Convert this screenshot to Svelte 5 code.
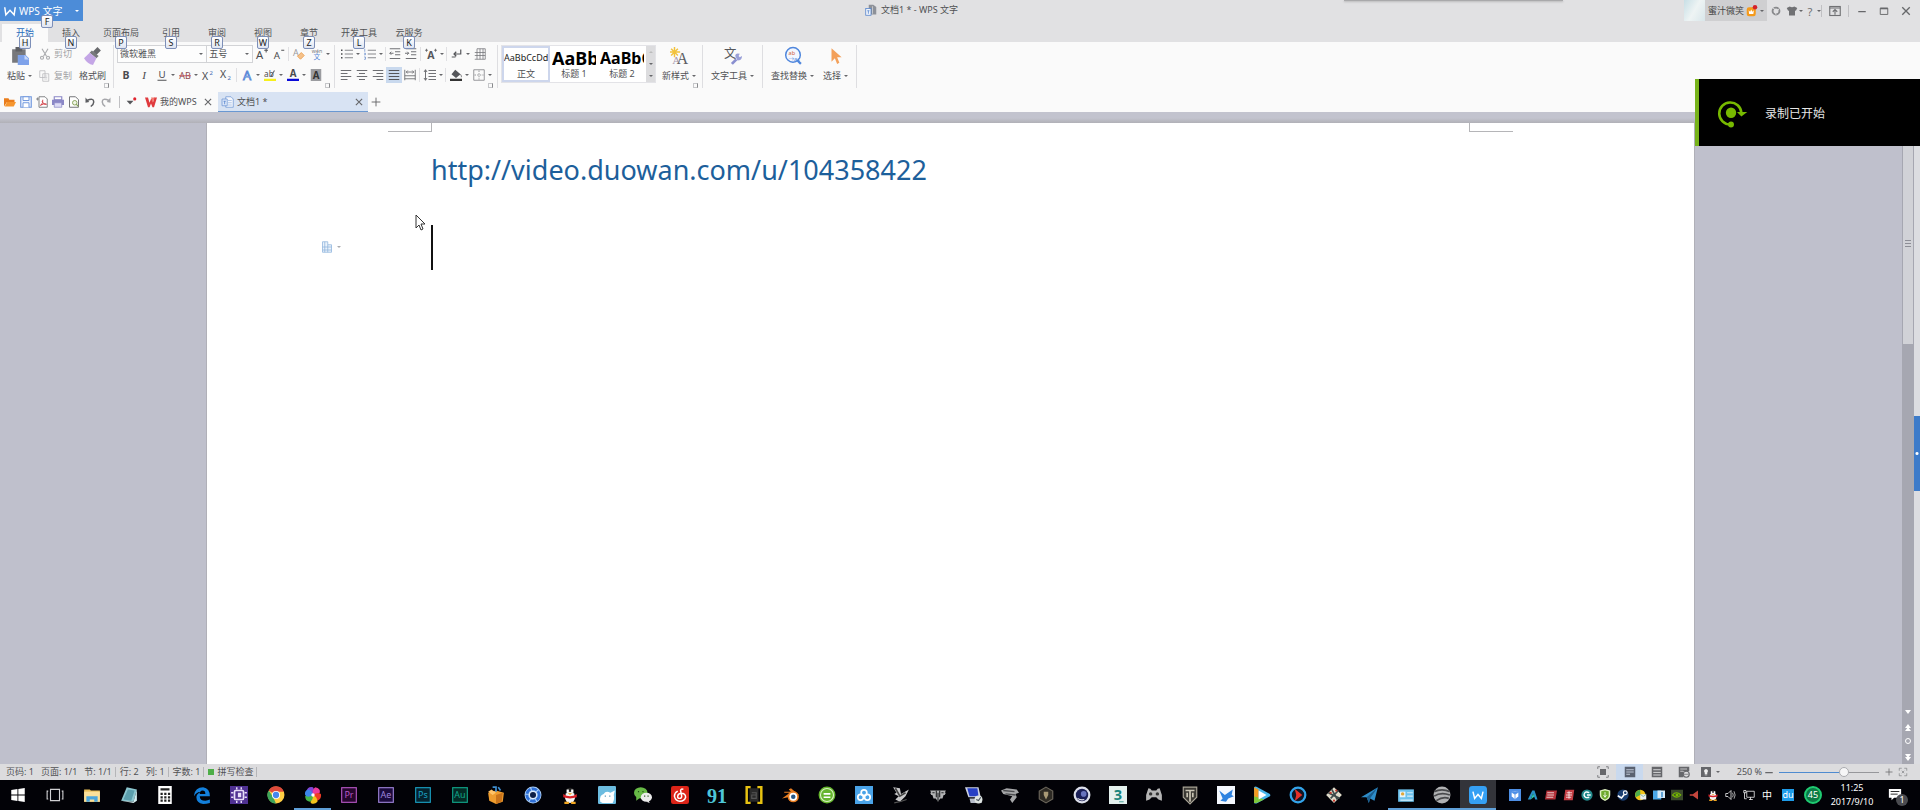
<script>
  let zoom = $state(250);
  let activeTab = $state('开始');
  let fontName = $state('微软雅黑');
  let fontSize = $state('五号');

  const tabs = [
    { name: '开始', key: 'H' },
    { name: '插入', key: 'N' },
    { name: '页面布局', key: 'P' },
    { name: '引用', key: 'S' },
    { name: '审阅', key: 'R' },
    { name: '视图', key: 'W' },
    { name: '章节', key: 'Z' },
    { name: '开发工具', key: 'L' },
    { name: '云服务', key: 'K' }
  ];

  const fontTools = [
    { icon: 'bold', label: '加粗' },
    { icon: 'italic', label: '倾斜' },
    { icon: 'underline', label: '下划线', drop: true },
    { icon: 'strike', label: '删除线', drop: true },
    { icon: 'sup', label: '上标' },
    { icon: 'sub', label: '下标' },
    { sep: true },
    { icon: 'effect', label: '文字效果', drop: true },
    { icon: 'mark', label: '突出显示', drop: true },
    { icon: 'color', label: '字体颜色', drop: true },
    { icon: 'shade', label: '字符底纹' }
  ];

  const fontTopTools = [
    { icon: 'grow', label: '增大字号' },
    { icon: 'shrink', label: '减小字号', slim: true },
    { sep: true },
    { icon: 'eraser', label: '清除格式' },
    { icon: 'pinyin', label: '拼音指南', drop: true }
  ];

  const paraTopTools = [
    { icon: 'bullets', label: '项目符号', drop: true },
    { icon: 'numbers', label: '编号', drop: true },
    { sep: true },
    { icon: 'outdent', label: '减少缩进', slim: true },
    { icon: 'indent', label: '增加缩进', slim: true },
    { sep: true },
    { icon: 'asian', label: '中文版式', drop: true },
    { sep: true },
    { icon: 'marks', label: '编辑标记', drop: true },
    { icon: 'grid', label: '表格' }
  ];

  const paraTools = [
    { icon: 'left', label: '左对齐', slim: true },
    { icon: 'center', label: '居中', slim: true },
    { icon: 'right', label: '右对齐', slim: true },
    { icon: 'justify', label: '两端对齐', slim: true, on: true },
    { icon: 'spread', label: '分散对齐', slim: true },
    { sep: true },
    { icon: 'spacing', label: '行距', drop: true },
    { sep: true },
    { icon: 'fill', label: '底纹', drop: true },
    { icon: 'border', label: '边框', drop: true }
  ];

  const quickTools = [
    { icon: 'open', label: '打开' },
    { icon: 'save', label: '保存' },
    { icon: 'pdf', label: '输出为PDF' },
    { icon: 'print', label: '打印' },
    { icon: 'preview', label: '打印预览' },
    { icon: 'undo', label: '撤销' },
    { icon: 'redo', label: '恢复' }
  ];

  const pinned = [
    'win', 'taskview', 'explorer', 'notepad', 'calc', 'edge', 'chip', 'chrome', 'pinwheel',
    'pr', 'ae', 'ps', 'au', 'box', 'camera', 'qq', 'seal', 'wechat', 'netease', 'n91',
    'bracket', 'blender', 'green', 'baidu', 'shark', 'wings'
  ];
  const more = [
    'pc', 'vehicle', 'hex', 'cinema', 'max3d', 'gamepad', 'wot', 'bird', 'play', 'redplay',
    'map', 'plane', 'card', 'globe', 'wps'
  ];
  const running = ['pinwheel', 'card', 'globe', 'wps'];

  const tray = [
    't1', 't2', 't3', 't4', 't5', 't6', 't7', 't8', 't9', 't10', 't11', 'qq', 'sound', 'network'
  ];

  const adobe = (text, color, bg) =>
    `<rect x="1.5" y="1.5" width="13" height="13" fill="${bg}" stroke="${color}"/><text x="8" y="11" font-size="8" text-anchor="middle" fill="${color}">${text}</text>`;

  const icons = {
    // 标题栏
    logo: '<path d="M1 3l1.500 10 5.500-6 5.500 6L15 3" fill="none" stroke="#fff" stroke-width="2"/>',
    doc: '<path d="M5 1h6l4 3v10H5" fill="#8d9199"/><path d="M10 3v10" stroke="#d8dade"/><rect x="1" y="6" width="7" height="9" fill="#eef3fb" stroke="#4d7fcb"/><path d="M3 9h3M4.500 9v4" stroke="#4d7fcb"/>',
    doctab: '<path d="M5 1h7l3 3v11H5z" fill="#f4f7fd" stroke="#6f97d3"/><path d="M8 6h5M8 9h5M8 12h5" stroke="#9db8e2"/><path d="M0 4h7v9H0z" fill="#dbe6f8" stroke="#6f97d3"/><path d="M2 7h3M3.500 7v4" stroke="#4d7fcb"/>',
    crown: '<rect x="1" y="3" width="12" height="12" rx="3" fill="#f59a1b"/><path d="M3.500 7l2 2L7 6l1.500 3 2-2-.7 5H4.200z" fill="#fff"/><circle cx="12" cy="3" r="3" fill="#d4202a"/>',
    ball: '<circle cx="8" cy="8" r="5.500" fill="none" stroke="#88898c" stroke-width="3"/><path d="M3 3l4 3M13 4l-3 4M8 14l-1-4" stroke="#e1e1e3" stroke-width="1.500" fill="none"/>',
    shirt: '<path d="M1 4l4-2q3 2 6 0l4 2-2 4-1-1v7H4V7L3 8z" fill="#707174"/>',
    help: '<text x="8" y="14" font-size="15" text-anchor="middle" fill="#707174">?</text>',
    hide: '<rect x="1" y="2" width="14" height="12" fill="none" stroke="#707174" stroke-width="1.500"/><path d="M1 4h14M8 13V7M5 9l3-3 3 3" stroke="#707174" stroke-width="1.500" fill="none"/>',
    min: '<path d="M2 9h12" stroke="#66676a" stroke-width="2"/>',
    max: '<path d="M2 3.500h12v10H2z" fill="none" stroke="#66676a" stroke-width="1.500"/><path d="M2 4h12" stroke="#66676a" stroke-width="2.500"/>',
    close: '<path d="M3 3l10 10M13 3L3 13" stroke="#66676a" stroke-width="1.800"/>',
    // 功能区
    paste: '<path d="M1 2h12v12H1z" fill="#77787c"/><rect x="4" y="0" width="6" height="4" fill="#5f6064"/><path d="M6 7h7l3 3v6H6z" fill="#7ea2ea"/><path d="M12 7v4h4" fill="#c6d8fa"/>',
    cut: '<path d="M4 1l6 10M12 1L6 11" stroke="#a9aaad" stroke-width="1.500"/><circle cx="4" cy="13" r="2" fill="none" stroke="#a9aaad" stroke-width="1.500"/><circle cx="12" cy="13" r="2" fill="none" stroke="#a9aaad" stroke-width="1.500"/>',
    copy: '<path d="M1 1h7v9H1zM5 5h8v10H5z" fill="#fafafa" stroke="#b5b6b9"/><path d="M7 8h4M7 10h4M7 12h4" stroke="#c5c6c9"/>',
    brush: '<path d="M12 0l3 3-4 4-3-3z" fill="#68696d"/><path d="M7 3l6 5-2 2-6-5z" fill="#77787c"/><path d="M5 5l6 5-3 6q-5-1-8-6z" fill="#c4a6e6"/>',
    bold: '<text x="8" y="13" font-size="14" font-weight="700" text-anchor="middle" fill="#4a4b4e">B</text>',
    italic: '<text x="8" y="13" font-size="15" font-style="italic" font-family="Liberation Serif" text-anchor="middle" fill="#4a4b4e">I</text>',
    underline: '<text x="8" y="12" font-size="13" text-anchor="middle" fill="#4a4b4e">U</text><path d="M2 15h12" stroke="#4a4b4e" stroke-width="1.300"/>',
    strike: '<text x="8" y="13" font-size="12" text-anchor="middle" fill="#8d4a50">AB</text><path d="M0 9h16" stroke="#c0505a" stroke-width="1.200"/>',
    sup: '<text x="0" y="14" font-size="14" fill="#4a4b4e">X</text><text x="10" y="8" font-size="8" fill="#4a6fb5">2</text>',
    sub: '<text x="0" y="12" font-size="14" fill="#4a4b4e">X</text><text x="10" y="15" font-size="8" fill="#4a6fb5">2</text>',
    effect: '<text x="8" y="14" font-size="17" text-anchor="middle" fill="#fff" stroke="#5b8ad8" stroke-width="1.200">A</text>',
    mark: '<text x="0" y="10" font-size="11" fill="#4a4b4e">ab</text><path d="M9 10l5-8" stroke="#66676a" stroke-width="1.500"/><path d="M0 13h16v3H0z" fill="#f7f01c"/>',
    color: '<text x="8" y="11" font-size="13" font-weight="700" text-anchor="middle" fill="#4a4b4e">A</text><path d="M0 13h16v3H0z" fill="#0a0ad8"/>',
    shade: '<rect x="1" y="0" width="14" height="16" fill="#9b9ca0"/><text x="8" y="13" font-size="13" font-weight="700" text-anchor="middle" fill="#333">A</text>',
    grow: '<text x="0" y="14" font-size="15" fill="#4a4b4e">A</text><path d="M11 3h5M13.500 0v6" stroke="#4a4b4e" stroke-width="1.300"/>',
    shrink: '<text x="1" y="14" font-size="13" fill="#4a4b4e">A</text><path d="M11 3h4" stroke="#4a4b4e" stroke-width="1.300"/>',
    eraser: '<text x="0" y="11" font-size="12" fill="#9a9ba0">A</text><path d="M11 6l4 4-5 5-4-4z" fill="#f5c18a" stroke="#e89742"/>',
    pinyin: '<text x="8" y="7" font-size="7" text-anchor="middle" fill="#77787c">wén</text><text x="8" y="15" font-size="9" text-anchor="middle" fill="#5b8ad8">文</text>',
    bullets: '<path d="M0 3h2M0 8h2M0 13h2" stroke="#4a4b4e" stroke-width="2"/><path d="M5 3h11M5 8h11M5 13h11" stroke="#85868a" stroke-width="1.300"/>',
    numbers: '<path d="M1 1v4M0 7h2v2H0M0 12h2v3H0" stroke="#6b8fcb" fill="none"/><path d="M5 3h11M5 8h11M5 13h11" stroke="#85868a" stroke-width="1.300"/>',
    outdent: '<path d="M1 1h14M8 5h7M8 9h7M1 14h14M6 7H1M3 5L1 7l2 2" stroke="#6d6e72" fill="none" stroke-width="1.300"/>',
    indent: '<path d="M1 1h14M8 5h7M8 9h7M1 14h14M0 7h5M3 5l2 2-2 2" stroke="#6d6e72" fill="none" stroke-width="1.300"/>',
    asian: '<text x="8" y="14" font-size="14" font-weight="700" text-anchor="middle" fill="#55565a">A</text><path d="M0 3h4M2 1v4M12 3h4M14 1v4" stroke="#55565a"/>',
    marks: '<path d="M13 2v6H4M7 5L4 8l3 3M1 12h5" stroke="#55565a" stroke-width="1.600" fill="none"/>',
    grid: '<path d="M4 1h11M1 6h14M1 10h14M4 1v14M8 1v14M12 1v14M15 1v14M1 15h14" stroke="#707175" fill="none"/>',
    left: '<path d="M1 2h14M1 6h9M1 10h14M1 14h9" stroke="#6d6e72" stroke-width="1.400"/>',
    center: '<path d="M1 2h14M4 6h8M1 10h14M4 14h8" stroke="#6d6e72" stroke-width="1.400"/>',
    right: '<path d="M1 2h14M6 6h9M1 10h14M6 14h9" stroke="#6d6e72" stroke-width="1.400"/>',
    justify: '<path d="M1 2h14M1 6h14M1 10h14M1 14h14" stroke="#55565a" stroke-width="1.400"/>',
    spread: '<path d="M1 1v14M15 1v14M3 4h10M5 2L3 4l2 2M11 2l2 2-2 2M1 9h14M1 13h14" stroke="#6d6e72" fill="none" stroke-width="1.200"/>',
    spacing: '<path d="M2 1v14M0 4l2-3 2 3M0 12l2 3 2-3M6 2h10M6 6h10M6 10h10M6 14h10" stroke="#6d6e72" fill="none" stroke-width="1.300"/>',
    fill: '<path d="M7 1l7 6-6 5-6-5z" fill="#55565a"/><path d="M14 7q2 3 1 4" stroke="#55565a" fill="none"/><path d="M0 13h16v3H0z" fill="#333"/>',
    border: '<path d="M1 1h14v14H1z" fill="none" stroke="#77787c"/><path d="M8 2v12M2 8h12" stroke="#77787c" stroke-dasharray="2 1.500"/>',
    newstyle: '<path d="M4 0v9M0 4.500h9M1 1.500l6 6M7 1.500l-6 6" stroke="#f2c23c" stroke-width="1.300"/><text x="2" y="15" font-size="10" fill="#a99bb0" font-family="Liberation Serif">A</text><text x="6" y="15" font-size="14" fill="#5d5e63" font-family="Liberation Serif">A</text>',
    texttool: '<text x="0" y="10" font-size="11" fill="#55565a">文</text><path d="M7 15l4-4" stroke="#8a8fd0" stroke-width="2.500"/><path d="M10 8q0-3 4-2l-1 2 1 1 2-1q0 4-4 4z" fill="#9aa0d8"/>',
    find: '<circle cx="8" cy="7" r="6.500" fill="#f3f7fe" stroke="#4f86dc" stroke-width="1.300"/><path d="M12 12l3 3" stroke="#4f86dc" stroke-width="2"/><text x="4" y="7" font-size="5" fill="#d0603c">ab</text><text x="4" y="12" font-size="5" fill="#4f86dc">→ac</text>',
    select: '<path d="M4 1v12l3-3 2 5 2-1-2-5h4z" fill="#f3a05a"/>',
    // 快速访问
    open: '<path d="M0 3h6l1 2h7v3H4l-4 6z" fill="#ea7d1c"/><path d="M4 8h12l-3 6H1z" fill="#f6962f"/>',
    save: '<path d="M1 1h14v14H1z" fill="#eef4fe" stroke="#6f97dd" stroke-width="1.500"/><path d="M4 1h8v5H4zM4 15V9h8v6" fill="#fff" stroke="#6f97dd" stroke-width="1.300"/>',
    pdf: '<path d="M4 1h8l3 3v11H4z" fill="#fff" stroke="#77787c" stroke-width="1.200"/><path d="M0 4h4M2 2v4" stroke="#77787c"/><path d="M6 13q4-4 3-8M8 7q1 4 6 4M6 12q4-2 8-1" stroke="#d2444b" fill="none" stroke-width="1.300"/>',
    print: '<path d="M3 1h10v4H3z" fill="#fff" stroke="#8a87c6" stroke-width="1.500"/><path d="M0 5h16v7H0z" fill="#8a87c6"/><path d="M3 9h10v6H3z" fill="#dddcf5" stroke="#8a87c6"/>',
    preview: '<path d="M2 1h8l4 4v10H2z" fill="#fff" stroke="#707175" stroke-width="1.300"/><circle cx="9" cy="9" r="3" fill="#f1f6e6" stroke="#88a35a" stroke-width="1.300"/><path d="M11 11l3 3" stroke="#88a35a" stroke-width="1.500"/>',
    undo: '<path d="M4 6q9-4 9 2 0 3-4 6" fill="none" stroke="#5d5e62" stroke-width="2"/><path d="M2 9V2l5 6z" fill="#5d5e62"/>',
    redo: '<path d="M12 6Q3 2 3 8q0 3 4 6" fill="none" stroke="#a5a6aa" stroke-width="2"/><path d="M14 9V2L9 8z" fill="#a5a6aa"/>',
    more: '<path d="M1 6h11l-5.500 6z" fill="#55565a"/><circle cx="14" cy="3" r="2.500" fill="#e0242e"/>',
    wpsred: '<path d="M0 2h4l2 7 2-5h2l1 4 1-6h4l-4 13h-2L8 10l-2 5H4z" fill="#e03a3e"/><path d="M8 2h5l-3 7z" fill="#f07a70"/>',
    plus: '<path d="M8 1v14M1 8h14" stroke="#66676a" stroke-width="1.500"/>',
    // 状态栏
    full: '<rect x="4" y="4" width="8" height="8" fill="#66676b"/><path d="M1 4V1h3M12 1h3v3M15 12v3h-3M4 15H1v-3" fill="none" stroke="#66676b"/>',
    viewpage: '<rect x="1" y="1" width="14" height="14" fill="#5a6271"/><path d="M3 5h10M3 8h10" stroke="#dfe7f5"/><path d="M3 11h5" stroke="#dfe7f5"/>',
    viewlist: '<rect x="1" y="1" width="14" height="14" fill="#66676b"/><path d="M3 5h10M3 8.500h10M3 12h10" stroke="#e4e4e6" stroke-width="1.200"/>',
    viewweb: '<path d="M1 1h14v6H7v8H1z" fill="#66676b"/><path d="M3 4h9M3 7h4" stroke="#e4e4e6"/><circle cx="11" cy="11" r="4" fill="none" stroke="#66676b" stroke-width="1.500"/><path d="M8 11h6" stroke="#66676b"/>',
    bulb: '<rect x="0" y="0" width="16" height="16" fill="#66676b"/><path d="M8 3a3.500 3.500 0 0 1 2 6v2H6V9a3.500 3.500 0 0 1 2-6zM6 12h4v1H6z" fill="#f0f0f0"/>',
    fit: '<path d="M2 6V2h4M10 2h4v4M14 10v4h-4M6 14H2v-4M6 6l4 4M10 6l-4 4" stroke="#77787c" fill="none"/>',
    // 任务栏
    win: '<path d="M2 3.500l5.500-.8v4.900H2zM8.300 2.600L14 1.800v5.800H8.300zM2 8.400h5.500v4.900L2 12.500zM8.300 8.400H14v5.800l-5.700-.8z" fill="#fff"/>',
    taskview: '<path d="M4 3h8v10H4zM2 4.500H1v7h1M14 4.500h1v7h-1" fill="none" stroke="#d0d0d3"/>',
    explorer: '<path d="M1 3h5l1 1h8v10H1z" fill="#e8bd58"/><path d="M1 5h14v9H1z" fill="#fae09a"/><path d="M3 14V9h10v5h-3v-2H6v2z" fill="#4aa5dc"/>',
    notepad: '<path d="M6 1l9 2-3 11-11-1z" fill="#8cc6cf"/><path d="M7 3l6 1-3 9-7-1z" fill="#5b9eac"/><path d="M1 13l11 1 3-11v10l-3 2z" fill="#d3edf0"/>',
    calc: '<rect x="2" y="0" width="12" height="16" fill="#fff"/><path d="M4 3h8" stroke="#222" stroke-width="2"/><path d="M4 7h9M4 10h9M4 13h9" stroke="#222" stroke-width="2" stroke-dasharray="2 1.300"/>',
    edge: '<path d="M1 8Q2 1 9 1q6 1 6 8H6q0 4 5 4 2 0 4-1v3q-3 1-6 1-6-1-6-6 0-3 4-5-4 0-6 4zM6 7h5q0-3-2.500-3T6 7z" fill="#1380dc"/>',
    chip: '<rect width="16" height="16" fill="#4f3192"/><rect x="4" y="4" width="8" height="8" rx="1" fill="none" stroke="#e7def8" stroke-width="1.500"/><path d="M6 1v2M10 1v2M6 13v2M10 13v2M1 6h2M1 10h2M13 6h2M13 10h2" stroke="#e7def8" stroke-width="1.300"/><rect x="7" y="6" width="3" height="4" fill="#e7def8"/>',
    chrome: '<circle cx="8" cy="8" r="7.500" fill="#ffce44"/><path d="M8 8L1.500 4A7.500 7.500 0 0 1 15 5H8z" fill="#df4a3b"/><path d="M1.500 4L5.500 10 8 15.500A7.500 7.500 0 0 1 1.500 4z" fill="#3da45a"/><circle cx="8" cy="8" r="3.600" fill="#fff"/><circle cx="8" cy="8" r="2.800" fill="#4586ee"/>',
    pinwheel: '<path d="M8 8L2 5Q3 0 8 1q2 3 0 7z" fill="#8046d8"/><path d="M8 8q-1-5 2-7 5 1 4 5-2 2-6 2z" fill="#ee3b9a"/><path d="M8 8q4-3 7-1 1 4-3 6-3-1-4-5z" fill="#ee3b26"/><path d="M8 8q4 2 4 6-3 3-6 1-1-3 2-7z" fill="#f4c41c"/><path d="M8 8q0 5-3 6-4-1-4-5 3-3 7-1z" fill="#45b449"/><path d="M8 8Q3 11 1 8q-1-4 3-5 3 1 4 5z" fill="#3c86ea"/><circle cx="8" cy="8" r="1.500" fill="#fff"/>',
    pr: adobe('Pr', '#b557c4', '#26062d'),
    ae: adobe('Ae', '#9c83d8', '#1b0a3c'),
    ps: adobe('Ps', '#1aa1c4', '#04222e'),
    au: adobe('Au', '#10a68a', '#032b25'),
    box: '<path d="M1 6l7-2 7 2-1 8-6 2-6-3z" fill="#ee9c2e"/><path d="M8 8l6-2-1 8-5 2z" fill="#c9731a"/><path d="M1 5l3-2 4 3-3 2z" fill="#ffc368"/><path d="M5 1h3v4M10 1l2 3" stroke="#3f8ed0" stroke-width="1.500" fill="none"/>',
    camera: '<circle cx="8" cy="8" r="7.500" fill="#a9cdf5"/><circle cx="8" cy="8" r="5.500" fill="none" stroke="#2f6fd6" stroke-width="2.500" stroke-dasharray="5 1"/><circle cx="8" cy="8" r="3.500" fill="#e4effc"/><circle cx="8" cy="8" r="2.700" fill="#0d1f46"/>',
    qq: '<circle cx="8" cy="5" r="3.500" fill="#222"/><ellipse cx="8" cy="10" rx="4.500" ry="5" fill="#f4f4f4"/><path d="M5 3h2v3H5zM9 3h2v3H9z" fill="#fff"/><path d="M2 7q6 4 12 0v3q-6 2-12 0z" fill="#d92027"/><path d="M6 6.500h4l-2 1.500zM3 14h4v2H3zM9 14h4v2H9z" fill="#f2a720"/>',
    seal: '<rect width="16" height="16" rx="1" fill="#6cbce0"/><path d="M2 14q-1-6 3-7 2-3 6-1l4-2-1 4q1 4-1 7H4z" fill="#fff"/><path d="M6 9h1M10 9h1" stroke="#4a90b5"/>',
    wechat: '<ellipse cx="6" cy="6" rx="6" ry="5" fill="#67b946"/><path d="M2 9l0 4 4-3z" fill="#67b946"/><ellipse cx="11" cy="10" rx="5" ry="4" fill="#ececec"/><path d="M13 13l1 2-3-1z" fill="#ececec"/><path d="M3.500 5h1M7.500 5h1M9 9h1M12 9h1" stroke="#235018" stroke-width="1.200"/>',
    netease: '<rect width="16" height="16" rx="2" fill="#dc2418"/><path d="M11 3q-2-1-2.500 1L9.500 9q0 2-2 2T6 9q0-2 3-2.500 4 0 4 3.500-1 3.500-5 3.500T3 9q0-3 3-4.500" fill="none" stroke="#fff" stroke-width="1.300"/>',
    n91: '<text x="8" y="15" font-size="18" font-family="Liberation Serif" font-weight="700" text-anchor="middle" fill="#4dc6d8">91</text>',
    bracket: '<rect x="4" y="2" width="8" height="12" fill="#292929"/><path d="M6 6h4v5H6V8h4" stroke="#555" fill="none"/><path d="M5 1H1.500v14H5M11 1h3.500v14H11" fill="none" stroke="#e7c212" stroke-width="2.200"/>',
    blender: '<path d="M0 11l7-5H2V5h6L6 3l2-1 7 6" fill="#e87d21"/><circle cx="10" cy="9.500" r="5" fill="#e87d21"/><circle cx="10" cy="9.500" r="3.500" fill="#fff"/><circle cx="10" cy="9.500" r="2" fill="#265787"/>',
    green: '<circle cx="8" cy="8" r="7.500" fill="#65b52d"/><circle cx="8" cy="8" r="5.800" fill="none" stroke="#d9f0c4"/><path d="M5 7h6M5 10h6" stroke="#fff" stroke-width="1.500"/>',
    baidu: '<rect width="16" height="16" fill="#4aa3e8"/><circle cx="8" cy="6" r="2.500" fill="none" stroke="#fff" stroke-width="1.500"/><circle cx="5" cy="10" r="2.500" fill="none" stroke="#fff" stroke-width="1.500"/><circle cx="11" cy="10" r="2.500" fill="none" stroke="#fff" stroke-width="1.500"/>',
    shark: '<path d="M1 1l6 1 1 5 7-4-3 6-5 5-4-2 3-3-4-2 2-1z" fill="#c9c9cb"/><path d="M3 2l4 7 5-3" stroke="#444" fill="none" stroke-width="1.500"/><path d="M2 15q6-1 11-3" stroke="#555" fill="none"/>',
    wings: '<path d="M1 4h14l-1 2h1l-1 2h-1l-1 3-2 0-2 3-2-3-2 0-1-3H2L1 6h1z" fill="#b2b3b5"/><path d="M6.500 4v6M9.500 4v6M8 6v8M3 6h2M11 6h2" stroke="#26272a"/>',
    pc: '<path d="M0 1h12l2 9H3z" fill="#cdd3e4"/><path d="M2 2h9l1 7H4z" fill="#263fc4"/><path d="M4 11l9 0 2 4H5z" fill="#b7bdc9"/><circle cx="12" cy="12" r="3.500" fill="#dfe5e2"/><path d="M10 12l2 1 2-3" stroke="#4b5560" fill="none"/>',
    vehicle: '<path d="M0 4l5-2 9 1 2 3-3 1 1 3-4 5-2-3 2-3-8-2z" fill="#a5a6a8"/><path d="M2 4l10 1M4 7l9 1" stroke="#4c4d50" stroke-width="1.300"/>',
    hex: '<path d="M8 1l6 3.500v7L8 15l-6-3.500v-7z" fill="#2d2a24" stroke="#6c675c"/><path d="M6 5h4v3L8 12 6 8z" fill="#a89976"/>',
    cinema: '<circle cx="8" cy="8" r="7.500" fill="#dcdfea"/><circle cx="8" cy="8" r="5.500" fill="#1a1f57"/><circle cx="9.500" cy="7" r="2.500" fill="#6874be"/><path d="M4 11q3 2 6 1" stroke="#eee" fill="none"/>',
    max3d: '<rect width="16" height="16" fill="#e4f1ee"/><text x="8" y="12" font-size="13" font-weight="700" text-anchor="middle" fill="#17857c">3</text><path d="M9 14h4" stroke="#5aa9a2"/>',
    gamepad: '<path d="M3 2q2 0 3 2h4q1-2 3-2l2 6v5l-3-1-2-2H6l-2 2-3 1V8z" fill="#b5b5b5"/><circle cx="5" cy="7" r="1.500" fill="#333"/><circle cx="11" cy="7" r="1.500" fill="#333"/>',
    wot: '<path d="M2 1h12v9l-6 6-6-6z" fill="#3a3833" stroke="#aba698"/><path d="M4 4h8M8 4v10M5.500 6v4M10.500 6v4" stroke="#c9c4b4" stroke-width="1.500"/>',
    bird: '<rect width="16" height="16" fill="#f4f8fe"/><path d="M2 4l5 4 7-5-1 5 2 1-5 2-2 3-5-1 2-2z" fill="#2f83e0"/>',
    play: '<path d="M1 1q1-1 3 0l11 6q1 1 0 2L4 15q-2 1-3 0z" fill="#47b6ea"/><path d="M1 1v14l4-2V3z" fill="#f59a1f"/><path d="M1 9l9 3-7 3H1z" fill="#7cc83c"/><path d="M5 4l7 4-7 4z" fill="#fff"/>',
    redplay: '<circle cx="8" cy="8" r="6.500" fill="#101624" stroke="#33a4ea" stroke-width="2"/><path d="M6 4l5 4-5 4 1-4z" fill="#e83128" stroke="#e83128"/>',
    map: '<path d="M8 1l7 7-7 7-7-7z" fill="#e0dccb"/><path d="M3 6l10 5M5 11l7-7M6 3l5 9" stroke="#3d4a4a" stroke-width="1.500"/><circle cx="5" cy="6" r="1" fill="#c7372a"/><circle cx="10" cy="4" r="1" fill="#c7372a"/><circle cx="8" cy="13" r="1" fill="#c7372a"/>',
    plane: '<path d="M0 10L15 1l-3 12-4-2-1 4-2-5z" fill="#2e8cc8"/><path d="M15 1L5 10l2 5 1-4z" fill="#1b5d8c"/>',
    card: '<rect x="1" y="3" width="14" height="11" fill="#6ec3ee"/><rect x="2.500" y="5" width="5" height="5" fill="#e6f5fc"/><path d="M9 6h5M9 9h5M3 12.500h11" stroke="#d6eefa"/><circle cx="5" cy="7" r="1.500" fill="#e0a83c"/>',
    globe: '<circle cx="8" cy="8" r="7.500" fill="#b0b1b3"/><path d="M1 5q7-3 14 0M1 9q6-4 14-1M3 13q6-4 11-2" stroke="#48494c" stroke-width="1.600" fill="none"/>',
    wps: '<rect width="16" height="16" rx="3" fill="#35a0f4"/><path d="M3.500 5l1.500 6L8 7.500l3 3.500 1.500-6" fill="none" stroke="#fff" stroke-width="1.300"/>',
    t1: '<rect width="16" height="16" fill="#4e8fe6"/><path d="M3 4l5-1 5 1v6l-5 4-5-4zM3 4l5 3 5-3M8 7v7" fill="#fff" stroke="#4e8fe6"/>',
    t2: '<path d="M1 14L7 2h3l4 12h-3L8 6l-3 8z" fill="#2a92c8"/><path d="M5 14l3-8 2 4z" fill="#2ec4a5"/>',
    t3: '<path d="M2 2h14l-2 12H0z" fill="#b33038"/><path d="M3 5h9M3 8h9M2 11h9" stroke="#e8c8c8" stroke-width="1.500"/>',
    t4: '<path d="M3 1h12l-2 14H1z" fill="#c33d43"/><path d="M5 5h7M4 8h8M4 11h7M8 3v10" stroke="#fff"/>',
    t5: '<circle cx="8" cy="8" r="7.500" fill="#248a8c"/><path d="M11 5q-6-3-7 3 1 5 7 3M8 8h5" fill="none" stroke="#fff" stroke-width="1.800"/>',
    t6: '<path d="M8 0l7 2v6q0 5-7 8-7-3-7-8V2z" fill="#dff1c0"/><path d="M8 2l5 1v5q0 4-5 6-5-2-5-6V3z" fill="#6faa2e"/><path d="M8 4v7M6 8l2 3 2-3" stroke="#fff" fill="none"/>',
    t7: '<circle cx="8" cy="8" r="7.500" fill="#1b3f72"/><circle cx="11" cy="5" r="2.500" fill="none" stroke="#fff" stroke-width="1.500"/><path d="M1 9l5 3 4-5" stroke="#fff" stroke-width="2" fill="none"/>',
    t8: '<circle cx="7" cy="8" r="7" fill="#f0c419"/><path d="M7 1a7 7 0 0 0-6 10l6-3z" fill="#4cae4c"/><rect x="7" y="7" width="8" height="7" fill="#e8eef0"/><path d="M7 7l4 3 4-3" stroke="#6a8" fill="none"/>',
    t9: '<rect x="0" y="2" width="11" height="12" fill="#4aa7e8"/><rect x="6" y="2" width="10" height="10" fill="#d3e9f8"/><path d="M12 4v7" stroke="#3a8acb" stroke-width="2"/>',
    t10: '<rect x="0" y="1" width="16" height="14" fill="#3b4a2c"/><path d="M2 8q5-6 11 0-5 6-11 0z" fill="none" stroke="#76b900" stroke-width="1.500"/><circle cx="8" cy="8" r="2" fill="#76b900"/>',
    t11: '<path d="M1 7h4l7-5v12L5 9H1z" fill="#c5463d"/>',
    sound: '<path d="M1 6h3l4-4v12l-4-4H1z" fill="none" stroke="#fff"/><path d="M10 5q2 3 0 6M12 3q3 5 0 10" fill="none" stroke="#ddd"/>',
    network: '<path d="M5 3h10v8H5zM8 14h5M10 11v3M1 2h3v3H1zM2 5v8h3" fill="none" stroke="#fff"/>',
    notice: '<path d="M1 1h14v10H7l-3 3v-3H1z" fill="#fff"/><path d="M3 4h10M3 7h8" stroke="#111"/>',
    // 文档区
    pasteopt: '<path d="M2 1h7v4h5v10H2z" fill="#eaf2fb" stroke="#8db3dc"/><path d="M5 1v14M2 8h12M2 12h12M9 5v10" stroke="#8db3dc"/>',
    pointer: '<path d="M3 0v13l3-3 2 5 2-1-2-5h4z" fill="#fff" stroke="#333"/>',
    record: '<path d="M18 36A15 15 0 1 1 33 20" fill="none" stroke="#77b900" stroke-width="3.500"/><path d="M27 19h14l-8 6z" fill="#77b900"/><circle cx="19" cy="20" r="7" fill="#77b900"/><circle cx="19" cy="36" r="4" fill="#77b900"/>'
  };
</script>

{#snippet icon(name, cls = '')}
  <svg class="icon {cls}" viewBox="0 0 16 16" aria-hidden="true">{@html icons[name]}</svg>
{/snippet}

{#snippet tools(list)}
  {#each list as t}
    {#if t.sep}
      <span class="sep"></span>
    {:else}
      <button class="tool" class:slim={t.slim} class:on={t.on} aria-label={t.label}>
        <span class="face">{@render icon(t.icon)}</span>
        {#if t.drop}<i class="caret"></i>{/if}
      </button>
    {/if}
  {/each}
{/snippet}

{#snippet big(name, text, drop)}
  <button class="big">
    {@render icon(name, 'i18')}
    <span class="cap">{text}{#if drop}<i class="caret"></i>{/if}</span>
  </button>
{/snippet}

<div class="window">
  <header class="titlebar">
    <button class="brand">
      {@render icon('logo', 'i12')}
      <span>WPS 文字</span>
      <i class="caret light"></i>
      <kbd class="key">F</kbd>
    </button>
    <div class="title">{@render icon('doc', 'i12')}<span>文档1 * - WPS 文字</span></div>
    <div class="controls">
      <span class="avatar"></span>
      <button class="user">蜜汁微笑 {@render icon('crown', 'i12')}<i class="caret"></i></button>
      <button class="ctl" aria-label="社区">{@render icon('ball', 'i10')}</button>
      <button class="ctl" aria-label="皮肤">{@render icon('shirt', 'i12')}<i class="caret"></i></button>
      <button class="ctl" aria-label="帮助">{@render icon('help', 'i12')}<i class="caret"></i></button>
      <span class="bar"></span>
      <button class="ctl wide" aria-label="隐藏功能区">{@render icon('hide', 'i12')}</button>
      <span class="bar"></span>
      <button class="ctl wide" aria-label="最小化">{@render icon('min', 'i10')}</button>
      <button class="ctl" aria-label="最大化">{@render icon('max', 'i10')}</button>
      <button class="ctl wide" aria-label="关闭">{@render icon('close', 'i12')}</button>
    </div>
    <span class="peek"></span>
  </header>

  <nav class="tabs">
    {#each tabs as tab}
      <button class="tab" class:active={activeTab === tab.name} onclick={() => (activeTab = tab.name)}>
        {tab.name}<kbd class="key">{tab.key}</kbd>
      </button>
    {/each}
  </nav>

  <section class="ribbon">
    <div class="group clipboard">
      {@render big('paste', '粘贴', true)}
      <div class="stack">
        <button class="small">{@render icon('cut', 'i12')}剪切</button>
        <button class="small">{@render icon('copy', 'i12')}复制</button>
      </div>
      {@render big('brush', '格式刷', false)}
      <span class="launch"></span>
    </div>

    <div class="group font">
      <div class="row">
        <div class="combo">
          <select aria-label="字体" bind:value={fontName}>
            <option>微软雅黑</option>
            <option>宋体</option>
          </select>
          <i class="caret"></i>
        </div>
        <div class="combo size">
          <select aria-label="字号" bind:value={fontSize}>
            <option>五号</option>
            <option>小四</option>
          </select>
          <i class="caret"></i>
        </div>
        {@render tools(fontTopTools)}
      </div>
      <div class="row">{@render tools(fontTools)}</div>
      <span class="launch"></span>
    </div>

    <div class="group para">
      <div class="row">{@render tools(paraTopTools)}</div>
      <div class="row">{@render tools(paraTools)}</div>
      <span class="launch"></span>
    </div>

    <div class="group styles">
      <div class="gallery">
        <button class="style chosen"><span class="sample">AaBbCcDd</span><span>正文</span></button>
        <button class="style"><b class="sample h1">AaBb</b><span>标题 1</span></button>
        <button class="style"><b class="sample h2">AaBbC</b><span>标题 2</span></button>
        <div class="scroller">
          <i class="caret up"></i><i class="caret"></i><i class="caret lined"></i>
        </div>
      </div>
      {@render big('newstyle', '新样式', true)}
      <span class="launch"></span>
    </div>

    <div class="group">{@render big('texttool', '文字工具', true)}</div>
    <div class="group last">
      {@render big('find', '查找替换', true)}
      {@render big('select', '选择', true)}
    </div>
  </section>

  <div class="quickbar">
    {#each quickTools as q}
      <button class="quick" aria-label={q.label}>{@render icon(q.icon, 'i12')}</button>
    {/each}
    <span class="bar"></span>
    <button class="quick" aria-label="自定义">{@render icon('more', 'i10')}</button>
    <div class="doctab">
      {@render icon('wpsred', 'i12')}<span>我的WPS</span>
      <button class="x" aria-label="关闭我的WPS">{@render icon('close', 'i10')}</button>
    </div>
    <div class="doctab current">
      {@render icon('doctab', 'i12')}<span>文档1 *</span>
      <button class="x" aria-label="关闭文档1">{@render icon('close', 'i10')}</button>
    </div>
    <button class="quick" aria-label="新建">{@render icon('plus', 'i10')}</button>
  </div>

  <main class="workspace">
    <div class="canvas">
      <article class="page">
        <span class="corner lt"></span>
        <span class="corner rt"></span>
        <a class="link" href="http://video.duowan.com/u/104358422">http://video.duowan.com/u/104358422</a>
        <span class="insertion"></span>
        <span class="pointer">{@render icon('pointer', 'i16')}</span>
        <button class="pasteopt" aria-label="粘贴选项">{@render icon('pasteopt', 'i12')}<i class="caret"></i></button>
      </article>
    </div>
    <div class="scroll">
      <div class="thumb"><i></i><i></i><i></i></div>
      <div class="jump">
        <i class="tri"></i>
        <i class="tri up twice"></i>
        <i class="dot"></i>
        <i class="tri twice"></i>
      </div>
    </div>
    <div class="side"><span class="handle"></span></div>
  </main>

  <footer class="status">
    <span class="info">页码: 1</span>
    <span class="info">页面: 1/1</span>
    <span class="info ruled">节: 1/1</span>
    <span class="info">行: 2</span>
    <span class="info ruled">列: 1</span>
    <span class="info ruled">字数: 1</span>
    <button class="spell"><i></i>拼写检查</button>
    <div class="views">
      <button class="view" aria-label="全屏显示">{@render icon('full', 'i12')}</button>
      <button class="view on" aria-label="页面视图">{@render icon('viewpage', 'i12')}</button>
      <button class="view" aria-label="大纲视图">{@render icon('viewlist', 'i12')}</button>
      <button class="view" aria-label="Web版式">{@render icon('viewweb', 'i12')}</button>
      <button class="view" aria-label="护眼模式">{@render icon('bulb', 'i10')}<i class="caret"></i></button>
      <span class="pct">{zoom} %</span>
      <button class="step" aria-label="缩小" onclick={() => (zoom -= 10)}>{@render icon('min', 'i10')}</button>
      <input class="zoom" type="range" min="10" max="368" aria-label="缩放" bind:value={zoom} />
      <button class="step" aria-label="放大" onclick={() => (zoom += 10)}>{@render icon('plus', 'i8')}</button>
      <button class="step" aria-label="最佳缩放">{@render icon('fit', 'i10')}</button>
    </div>
  </footer>

  <div class="taskbar">
    <div class="pinned">
      {#each pinned as app}
        <button class="app" class:running={running.includes(app)} aria-label={app}>{@render icon(app, 'i18')}</button>
      {/each}
    </div>
    <div class="more">
      {#each more as app}
        <button class="app" class:running={running.includes(app)} class:focus={app === 'wps'} aria-label={app}>{@render icon(app, 'i18')}</button>
      {/each}
    </div>
    <div class="tray">
      {#each tray as t}
        <span class="ti">{@render icon(t, 'i12')}</span>
      {/each}
      <span class="ti">中</span>
      <span class="du">du</span>
      <span class="ring">45</span>
      <div class="clock"><span>11:25</span><span>2017/9/10</span></div>
      <button class="notice" aria-label="通知">{@render icon('notice', 'i14')}<span class="count">1</span></button>
    </div>
  </div>

  <aside class="toast">
    <svg class="record" viewBox="0 0 42 42" aria-hidden="true">{@html icons.record}</svg>
    <span>录制已开始</span>
  </aside>
</div>

<style>
  :global(body) {
    margin: 0;
    overflow: hidden;
  }

  .window {
    position: relative;
    display: flex;
    flex-direction: column;
    height: 100vh;
    background: #e1e1e3;
    color: #505154;
    font: 9px/12px 'Noto Sans', 'Noto Sans CJK SC', sans-serif;
    white-space: nowrap;
  }

  button,
  select {
    display: flex;
    align-items: center;
    margin: 0;
    padding: 0;
    border: 0;
    background: none;
    color: inherit;
    font: inherit;
  }

  .icon {
    display: block;
    flex: none;
    width: 12px;
    height: 12px;
    overflow: visible;
  }
  .i8 { width: 8px; height: 8px; }
  .i10 { width: 10px; height: 10px; }
  .i14 { width: 14px; height: 14px; }
  .i16 { width: 16px; height: 16px; }
  .i18 { width: 18px; height: 18px; }

  .caret {
    flex: none;
    width: 0;
    height: 0;
    border: 2px solid transparent;
    border-top-color: #66676a;
    border-bottom: 0;
  }
  .caret.light { border-top-color: #fff; }
  .caret.up {
    border-top: 0;
    border-bottom: 2px solid #bbb;
  }
  .caret.lined { box-shadow: 0 -3px 0 -1px #66676a; }

  /* 标题栏 */
  .titlebar {
    position: relative;
    display: flex;
    align-items: flex-start;
    height: 24px;
  }
  .brand {
    position: relative;
    gap: 3px;
    width: 83px;
    height: 21px;
    padding: 0 4px;
    box-sizing: border-box;
    background: #4c8cd8;
    color: #fff;
    font-size: 10px;
  }
  .brand .light { margin-left: auto; }
  .brand .key {
    top: 15px;
    left: 41px;
  }
  .key {
    position: absolute;
    z-index: 2;
    width: 10px;
    height: 11px;
    border: 1px solid #7d8fb8;
    border-radius: 2px;
    background: linear-gradient(#fff, #dfe5f2);
    color: #222;
    font: 9px/11px 'Noto Sans', sans-serif;
    text-align: center;
  }
  .title {
    display: flex;
    flex: 1;
    align-items: center;
    justify-content: center;
    gap: 4px;
    height: 20px;
    padding-left: 56px;
  }
  .controls {
    display: flex;
    align-items: center;
    width: 236px;
    height: 21px;
  }
  .avatar {
    width: 21px;
    height: 21px;
    background: linear-gradient(120deg, #c8dfe6, #eef4f4 50%, #d8e6ea);
  }
  .user {
    gap: 2px;
    width: 62px;
    height: 21px;
    padding-left: 3px;
    box-sizing: border-box;
    background: #cfcfd1;
    color: #444;
  }
  .ctl {
    justify-content: center;
    gap: 1px;
    width: 18px;
  }
  .ctl.wide { width: 26px; }
  .bar {
    width: 1px;
    height: 12px;
    background: #c0c0c3;
  }
  .peek {
    position: absolute;
    top: 0;
    left: 70%;
    width: 219px;
    height: 1px;
    background: #a9a9ab;
    box-shadow: 0 1px 2px #aaa;
  }

  /* 选项卡 */
  .tabs {
    display: flex;
    height: 18px;
    padding-left: 2px;
  }
  .tab {
    position: relative;
    justify-content: center;
    min-width: 46px;
    padding: 0 9px;
  }
  .tab.active {
    background: #fafafa;
    color: #2a6dbd;
  }
  .tab .key {
    top: 12px;
    left: calc(50% - 6px);
  }

  /* 功能区 */
  .ribbon {
    display: flex;
    height: 50px;
    padding-top: 3px;
    box-sizing: border-box;
    background: #fafafa;
  }
  .group {
    position: relative;
    display: flex;
    height: 43px;
    padding: 0 5px;
    border-right: 1px solid #dedee1;
  }
  .launch {
    position: absolute;
    right: 4px;
    bottom: 0;
    width: 3px;
    height: 3px;
    border: 1px solid #c5c6c9;
    border-right-color: #88898c;
  }
  .big {
    flex-direction: column;
    justify-content: space-between;
    height: 37px;
    padding: 2px 3px 0;
    box-sizing: border-box;
  }
  .cap {
    display: flex;
    align-items: center;
    gap: 3px;
  }
  .clipboard {
    width: 103px;
    gap: 5px;
  }
  .clipboard .big { padding: 2px 2px 0; }
  .stack {
    display: flex;
    flex-direction: column;
    justify-content: space-between;
    height: 37px;
    padding-top: 3px;
    box-sizing: border-box;
  }
  .small {
    gap: 3px;
    color: #a2a3a6;
  }
  .font,
  .para {
    flex-direction: column;
    gap: 3px;
    padding: 0 3px;
  }
  .font { width: 214px; }
  .para { width: 156px; }
  .row {
    display: flex;
    align-items: center;
    height: 18px;
  }
  .combo {
    display: flex;
    align-items: center;
    width: 91px;
    height: 18px;
    padding-right: 3px;
    border: 1px solid #d2d3d6;
    box-sizing: border-box;
    background: #fdfdfd;
  }
  .combo.size {
    width: 46px;
    border-left: 0;
  }
  .combo select {
    flex: 1;
    min-width: 0;
    padding-left: 2px;
    appearance: none;
  }
  .tool { height: 16px; }
  .tool .caret { margin-right: 1px; }
  .face {
    display: flex;
    justify-content: center;
    width: 18px;
  }
  .slim .face { width: 16px; }
  .on { background: #c9d9ee; }
  .sep {
    width: 1px;
    height: 14px;
    margin: 0 1px;
    background: #e0e0e3;
  }
  .styles {
    gap: 3px;
    padding-left: 3px;
    width: 196px;
  }
  .gallery {
    display: flex;
    height: 38px;
    border: 1px solid #e3e3e7;
    box-sizing: border-box;
    background: #fff;
  }
  .style {
    flex-direction: column;
    justify-content: flex-end;
    width: 48px;
    padding: 0 2px 2px;
    box-sizing: border-box;
    overflow: hidden;
  }
  .chosen { box-shadow: inset 0 0 0 2px #cdd6ec; }
  .sample {
    width: 100%;
    overflow: hidden;
    color: #222;
    line-height: 20px;
    text-align: left;
  }
  .h1 {
    color: #000;
    font-size: 18px;
  }
  .h2 {
    color: #000;
    font-size: 16px;
  }
  .scroller {
    display: flex;
    flex-direction: column;
    align-items: center;
    justify-content: space-around;
    width: 9px;
    background: #dcdcde;
  }
  .last { gap: 3px; }

  /* 快速访问栏 */
  .quickbar {
    display: flex;
    flex: none;
    align-items: center;
    height: 20px;
    padding-left: 2px;
    background: #fafafa;
  }
  .quick {
    justify-content: center;
    width: 16px;
    height: 20px;
  }
  .quickbar .bar { margin: 0 3px 0 5px; }
  .doctab {
    display: flex;
    align-items: center;
    gap: 3px;
    width: 76px;
    height: 20px;
    margin-left: 2px;
    padding: 0 4px;
    box-sizing: border-box;
  }
  .quickbar .current {
    width: 150px;
    margin-left: 1px;
    border-bottom: 1px solid #6a98d2;
    background: #d8e3f3;
  }
  .x { margin-left: auto; }

  /* 文档区 */
  .workspace {
    display: flex;
    flex: 1;
    min-height: 0;
    background: #bfc0cc;
  }
  .canvas {
    display: flex;
    flex: 1;
    padding: 11px 208px 0 207px;
    background: linear-gradient(#c2c3ce 6px, #b1b1b7 11px, #bfc0cc 11px);
  }
  .page {
    position: relative;
    flex: 1;
    padding: 28px 224px 0;
    background: #fff;
    box-shadow: 1px 0 0 #b0b0b8, -1px 0 0 #b0b0b8;
  }
  .link {
    display: inline-block;
    color: #1d5f9b;
    font-size: 27px;
    line-height: 38px;
    text-decoration: none;
  }
  .corner {
    position: absolute;
    top: 0;
    width: 43px;
    height: 8px;
    border-bottom: 1px solid #b5b5b8;
  }
  .lt {
    left: 181px;
    border-right: 1px solid #b5b5b8;
  }
  .rt {
    right: 181px;
    border-left: 1px solid #b5b5b8;
  }
  .insertion {
    position: absolute;
    top: 102px;
    left: 224px;
    width: 2px;
    height: 45px;
    background: #111;
  }
  .pointer {
    position: absolute;
    top: 92px;
    left: 206px;
  }
  .pasteopt {
    position: absolute;
    top: 118px;
    left: 114px;
    gap: 4px;
  }
  .pasteopt .caret { border-top-color: #aaabaf; }

  .scroll {
    display: flex;
    flex-direction: column;
    justify-content: space-between;
    width: 12px;
    background: #a6a7b1;
  }
  .thumb {
    display: flex;
    flex-direction: column;
    align-items: center;
    justify-content: center;
    gap: 2px;
    height: 232px;
    margin: 0 1px;
    padding-top: 30px;
    box-sizing: border-box;
    background: #d1d2d7;
  }
  .thumb i {
    width: 6px;
    height: 1px;
    background: #8d8e96;
  }
  .jump {
    display: flex;
    flex-direction: column;
    align-items: center;
    gap: 10px;
    padding-bottom: 6px;
  }
  .tri {
    width: 0;
    height: 0;
    border: 3px solid transparent;
    border-top: 4px solid #fff;
    border-bottom: 0;
  }
  .tri.up {
    border-top: 0;
    border-bottom: 4px solid #fff;
  }
  .twice { filter: drop-shadow(0 3px 0 #fff); }
  .dot {
    width: 4px;
    height: 4px;
    border: 1px solid #fff;
    border-radius: 50%;
  }
  .side {
    display: flex;
    align-items: center;
    width: 6px;
    background: #dcdde1;
  }
  .handle {
    width: 6px;
    height: 75px;
    margin-top: 30px;
    background: radial-gradient(circle 2px, #fff 1px, #3d7bc9 2px);
  }

  /* 状态栏 */
  .status {
    display: flex;
    flex: none;
    align-items: center;
    height: 16px;
    padding: 0 10px 0 6px;
    background: #dcdcde;
  }
  .info { padding-right: 7px; }
  .ruled {
    margin-right: 4px;
    padding-right: 3px;
    border-right: 1px solid #b5b5b8;
    line-height: 10px;
  }
  .spell {
    gap: 3px;
    padding-right: 3px;
    border-right: 1px solid #b5b5b8;
    line-height: 10px;
  }
  .spell i {
    width: 6px;
    height: 6px;
    background: #4eae48;
  }
  .views {
    display: flex;
    align-items: center;
    margin-left: auto;
  }
  .view {
    justify-content: center;
    gap: 5px;
    width: 27px;
    height: 16px;
  }
  .pct {
    width: 38px;
    text-align: right;
  }
  .step {
    justify-content: center;
    width: 14px;
  }
  .zoom {
    width: 100px;
    height: 12px;
    margin: 0 3px;
    appearance: none;
    background: linear-gradient(90deg, #4e8bd0 67%, #96979b 67%) center / 100% 1px no-repeat;
  }
  .zoom::-webkit-slider-thumb {
    width: 10px;
    height: 10px;
    border: 1px solid #aaabaf;
    border-radius: 50%;
    background: #f6f6f7;
    appearance: none;
  }

  /* 任务栏 */
  .taskbar {
    display: flex;
    flex: none;
    height: 30px;
    background: #020207;
    color: #fff;
  }
  .pinned {
    display: grid;
    grid-template-columns: repeat(26, 1fr);
    width: 956px;
  }
  .more { display: flex; }
  .more .app { width: 36px; }
  .app {
    justify-content: center;
    height: 30px;
  }
  .running { box-shadow: inset 0 -2px 0 #5f9fd8; }
  .focus { background: #33343a; }
  .tray {
    display: flex;
    align-items: center;
    margin-left: auto;
    padding-right: 8px;
  }
  .ti {
    display: flex;
    justify-content: center;
    width: 18px;
    font-size: 10px;
  }
  .du {
    width: 12px;
    margin: 0 6px;
    background: #1e9be8;
    text-align: center;
  }
  .ring {
    width: 14px;
    height: 14px;
    margin: 0 4px;
    border: 2px solid #1fcb72;
    border-radius: 50%;
    background: #0c7a45;
    line-height: 14px;
    text-align: center;
  }
  .clock {
    display: flex;
    flex-direction: column;
    align-items: center;
    gap: 2px;
    width: 52px;
  }
  .notice {
    position: relative;
    justify-content: center;
    width: 34px;
    height: 30px;
  }
  .count {
    position: absolute;
    right: 4px;
    bottom: 4px;
    width: 12px;
    border-radius: 50%;
    background: #4a4b50;
    text-align: center;
  }

  /* 录制提示 */
  .toast {
    position: absolute;
    z-index: 3;
    top: 79px;
    right: 0;
    display: flex;
    align-items: center;
    gap: 17px;
    width: 225px;
    height: 67px;
    padding: 2px 0 0 18px;
    border-left: 4px solid #77b31a;
    box-sizing: border-box;
    background: #000;
    color: #e6e6e6;
    font-size: 12px;
  }
  .record {
    width: 31px;
    height: 31px;
  }
</style>
